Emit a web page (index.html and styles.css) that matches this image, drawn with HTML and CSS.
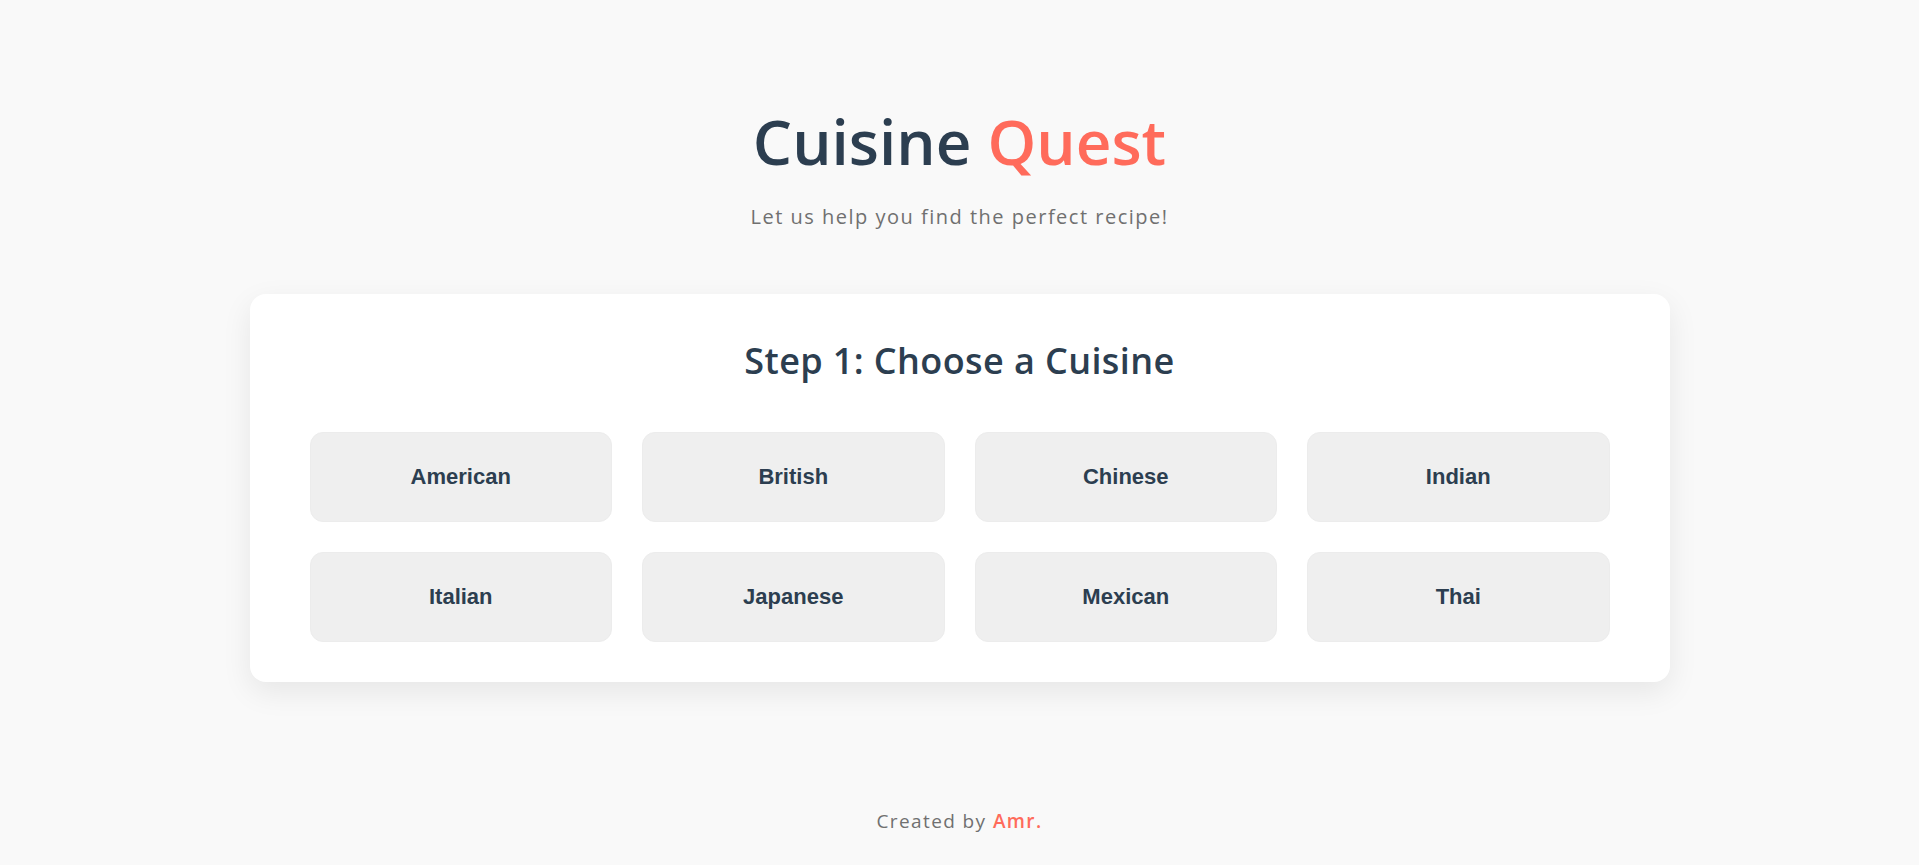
FILE: index.html
```html
<!DOCTYPE html>
<html lang="en">
<head>
<meta charset="utf-8">
<title>Cuisine Quest</title>
<link rel="stylesheet" href="styles.css">
</head>
<body>
<div class="page">
  <header class="hero">
    <h1 class="title">Cuisine <span class="accent">Quest</span></h1>
    <p class="subtitle">Let us help you find the perfect recipe!</p>
  </header>
  <main class="card">
    <h2 class="step-title">Step 1: Choose a Cuisine</h2>
    <div class="grid">
      <button class="cuisine">American</button>
      <button class="cuisine">British</button>
      <button class="cuisine">Chinese</button>
      <button class="cuisine">Indian</button>
      <button class="cuisine">Italian</button>
      <button class="cuisine">Japanese</button>
      <button class="cuisine">Mexican</button>
      <button class="cuisine">Thai</button>
    </div>
  </main>
  <footer class="footer">Created by <span class="author">Amr.</span></footer>
</div>
</body>
</html>
```

FILE: styles.css
```css
* { box-sizing: border-box; }
html, body { margin: 0; padding: 0; }
body {
  background: #f9f9f9;
  font-family: "Open Sans", "Noto Sans", sans-serif;
  color: #2c3e50;
}
.page {
  display: flex;
  flex-direction: column;
  align-items: center;
  padding-top: 105px;
}
.hero { text-align: center; }
.title {
  margin: 0;
  font-size: 62px;
  line-height: 72px;
  font-weight: 600;
  color: #2c3e50;
}
.accent { color: #ff6b5b; }
.subtitle {
  margin: 26px 0 0;
  font-size: 20px;
  line-height: 28px;
  letter-spacing: 1.5px;
  color: #707070;
}
.card {
  margin-top: 63px;
  width: 1420px;
  background: #ffffff;
  border-radius: 16px;
  padding: 40px 60px;
  box-shadow: 0 10px 30px rgba(0, 0, 0, 0.08);
}
.step-title {
  margin: 0 0 44px;
  text-align: center;
  font-size: 36px;
  line-height: 54px;
  font-weight: 600;
  letter-spacing: 0.4px;
  color: #2c3e50;
}
.grid {
  display: grid;
  grid-template-columns: repeat(4, 1fr);
  gap: 30px;
}
.cuisine {
  height: 90px;
  border: 1px solid #ececec;
  background: #efefef;
  border-radius: 13px;
  font-family: "Liberation Sans", Arial, sans-serif;
  font-weight: 700;
  font-size: 22px;
  color: #2c3e50;
  cursor: pointer;
}
.footer {
  margin-top: 126px;
  font-size: 19px;
  line-height: 27px;
  letter-spacing: 1.4px;
  color: #707070;
}
.author { color: #ff6b5b; font-weight: 600; }
```
